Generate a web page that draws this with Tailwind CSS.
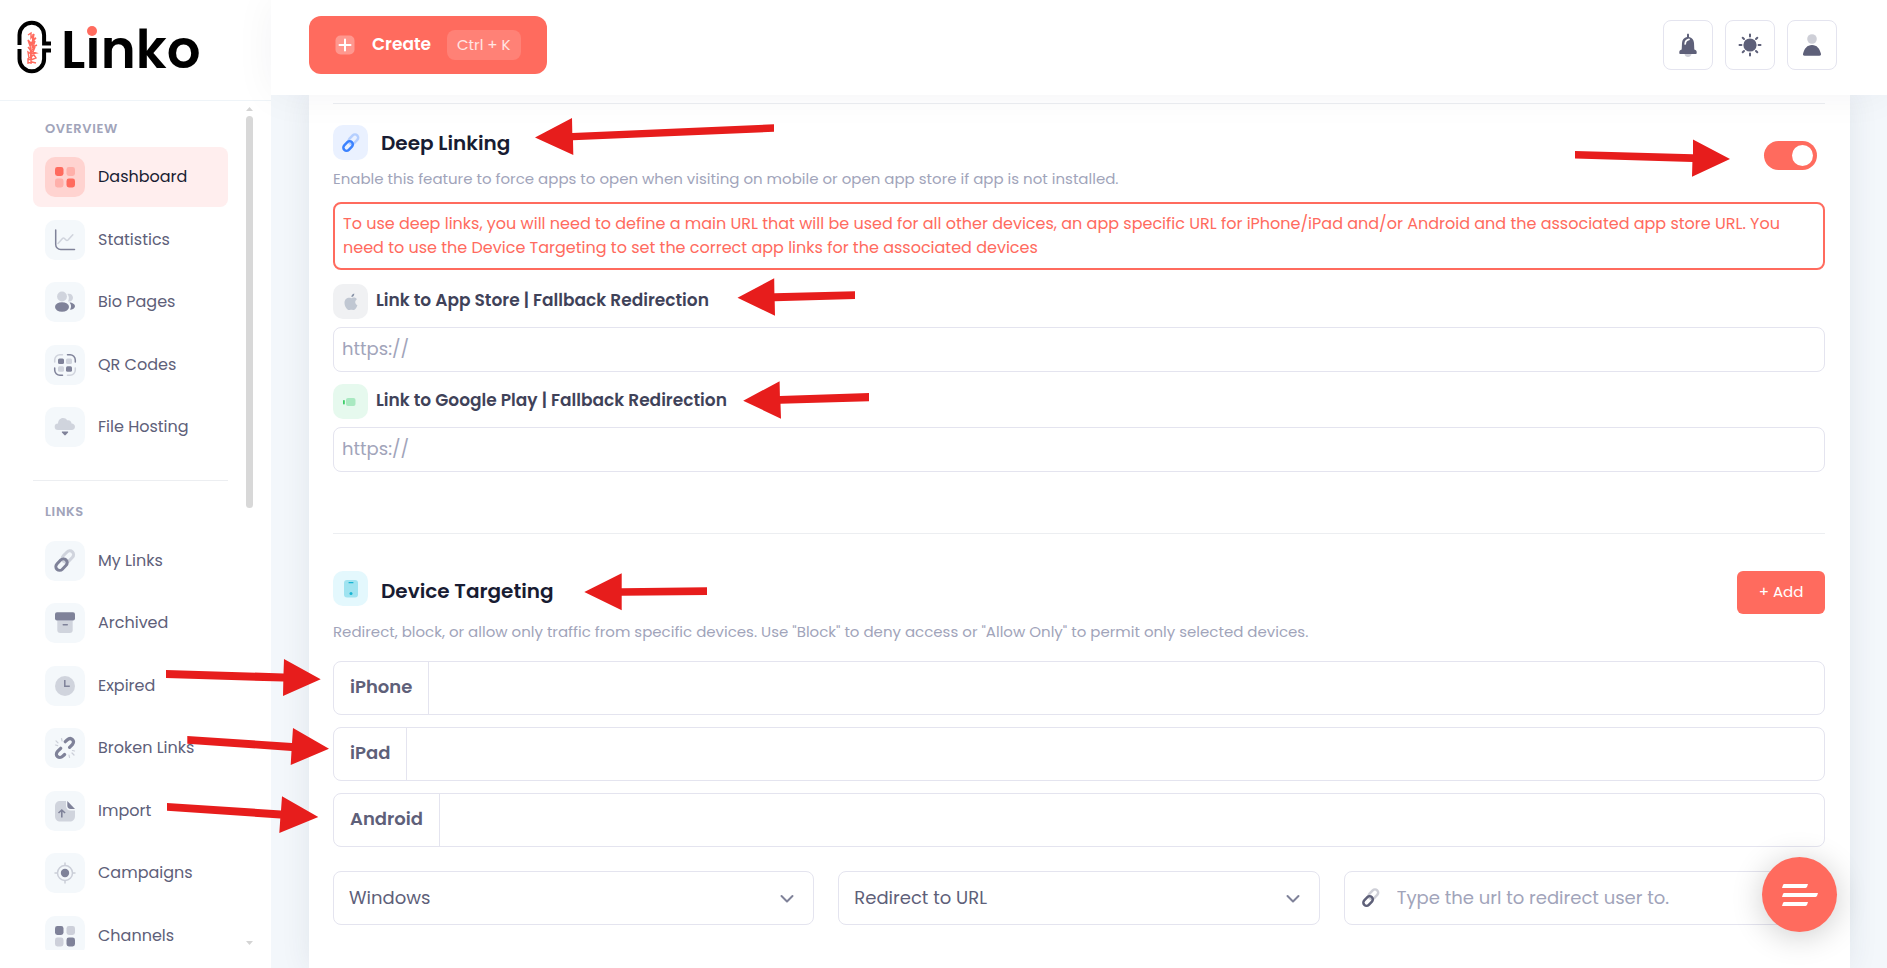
<!DOCTYPE html>
<html lang="en">
<head>
<meta charset="utf-8">
<meta name="viewport" content="width=device-width, initial-scale=1">
<title>Linko</title>
<script src="https://cdn.jsdelivr.net/npm/@tailwindcss/browser@4"></script>
</head>
<body class="relative flex h-screen overflow-hidden bg-[#f3f7fb] font-['Poppins','Inter',sans-serif] text-[#5e6079]">

<svg class="hidden" aria-hidden="true">
  <symbol id="grid" viewBox="0 0 24 24"><g fill="currentColor"><rect x="2" y="2" width="8.5" height="9" rx="2.4"/><rect x="13.5" y="13.5" width="8.5" height="9" rx="2.4"/><g opacity=".33"><rect x="13.5" y="2" width="8.5" height="9" rx="2.4"/><rect x="2" y="13.5" width="8.5" height="9" rx="2.4"/></g></g></symbol>
  <symbol id="chart" viewBox="0 0 24 24"><g fill="none" stroke="currentColor" stroke-linecap="round" stroke-linejoin="round"><path d="M2.7 2v14.500a5 5 0 0 0 5 5H21.500" stroke-width="1.500"/><path opacity=".3" d="M5 15.500l4.500-5q1-1 2 0l1.500 1.500q1 1 2 0l4.800-5.300" stroke-width="1.500"/></g></symbol>
  <symbol id="users" viewBox="0 0 24 24"><g fill="currentColor"><ellipse cx="9" cy="17" rx="7" ry="4.800"/><path d="M16.500 12.600c3 0 5.500 1.800 5.500 3.700s-2.300 3.400-5 3.400c1.500-2.300 1.600-4.800-.5-7.100z"/><g opacity=".3"><circle cx="9" cy="6.500" r="4.900"/><path d="M14.400 3.900c2.800-.9 5.600.9 5.600 3.800 0 2.700-2.500 4.500-5 3.700 1.300-2.300 1.200-5.200-.6-7.500z"/></g></g></symbol>
  <symbol id="qr" viewBox="0 0 24 24"><g fill="none" stroke="currentColor" stroke-width="1.500" stroke-linecap="round"><path d="M14.500 1.700h2.500a5.300 5.300 0 0 1 5.300 5.300v2"/><path d="M1.700 15v2a5.300 5.300 0 0 0 5.300 5.300h2.500"/><g opacity=".3"><path d="M9.500 1.700H7A5.300 5.300 0 0 0 1.700 7v2"/><path d="M22.300 15v2a5.300 5.300 0 0 1-5.300 5.300h-2.500"/></g></g><g fill="currentColor"><rect x="5" y="5.500" width="6" height="5.500" rx="1.500"/><rect x="13" y="13.200" width="6" height="5.500" rx="1.500"/><g opacity=".3"><rect x="13" y="5.500" width="6" height="5.500" rx="1.500"/><rect x="5" y="13.200" width="6" height="5.500" rx="1.500"/></g></g></symbol>
  <symbol id="cloud" viewBox="0 0 24 24"><g fill="currentColor"><path opacity=".3" d="M5 15a3.300 3.300 0 0 1 0-6.600C5.300 5.300 7.200 3 10 3c1.800 0 3.300.9 4.200 2.300 2.300-.7 4.200.8 4.300 3.200 2 .1 3.500 1.500 3.500 3.300S20.600 15 18.800 15z"/><path d="M9.500 16.500h5c.6 0 .9.600.5 1.100l-2.300 2.500q-.7.700-1.400 0L9 17.600c-.4-.5-.1-1.100.5-1.100z"/></g></symbol>
  <symbol id="chain" viewBox="0 0 24 24"><g fill="none" stroke="currentColor" stroke-width="3"><rect opacity=".3" x="8.700" y="3.600" width="13" height="7.600" rx="3.800" transform="rotate(-46 15.200 7.800)"/><rect x="2.300" y="11.700" width="13" height="7.600" rx="3.800" transform="rotate(-46 8.800 15.900)"/></g></symbol>
  <symbol id="archive" viewBox="0 0 24 24"><g fill="currentColor"><rect x="2" y="1.300" width="20" height="8.200" rx="2"/><path opacity=".3" d="M4.300 9.500h15.400V19a3 3 0 0 1-3 3H7.300a3 3 0 0 1-3-3z"/><rect x="9.500" y="13" width="5.500" height="1.400" rx=".7"/></g></symbol>
  <symbol id="clock" viewBox="0 0 24 24"><circle cx="12" cy="12" r="10" fill="currentColor" opacity=".3"/><path d="M11.800 6v6.300h5" fill="none" stroke="currentColor" stroke-width="1.500"/></symbol>
  <symbol id="broken" viewBox="0 0 24 24"><g fill="none" stroke="currentColor" stroke-linecap="round"><path d="M12.300 5.700l1.800-1.700c4-3.700 8.300.8 5.200 4.700l-2.700 2.700M7.700 12.300l-2.900 2.900c-4 4 1.400 8.500 5 5l1.800-1.700" stroke-width="3.200"/><path opacity=".35" d="M8.500 2.500l.6 2.500M3 4.800l2 2M2.500 9l2.200.6M16 19l.5 2.500M19 17l2 2M19.500 14.500l2 .5" stroke-width="1.200"/></g></symbol>
  <symbol id="import" viewBox="0 0 24 24"><g fill="currentColor"><path opacity=".3" d="M7.500 2H13v4.500c0 3 1.800 5 4.800 5H22v5.500c0 3.500-2 5.500-5.500 5.500h-9C4 22.500 2 20.500 2 17V7.500C2 4 4 2 7.500 2z"/><path d="M14.300 2L22 10h-4.200c-2.300 0-3.500-1.400-3.500-3.500z"/></g><path d="M8.800 18.500v-7M5.500 14l3.300-3 3.300 3" fill="none" stroke="currentColor" stroke-width="1.600"/></symbol>
  <symbol id="target" viewBox="0 0 24 24"><circle cx="12" cy="12" r="4.200" fill="currentColor"/><g opacity=".35" fill="none" stroke="currentColor" stroke-width="1.500"><circle cx="12" cy="12" r="7.500"/><path d="M12 1.500v3M12 19.500v3M1.500 12h3M19.500 12h3"/></g></symbol>
  <symbol id="chev" viewBox="0 0 16 16"><path d="M2.500 5l5.500 5.500L13.500 5" fill="none" stroke="currentColor" stroke-width="2" stroke-linecap="round" stroke-linejoin="round"/></symbol>
</svg>

<aside class="flex w-[271px] shrink-0 flex-col bg-white pb-[18px]">
  <a href="#" aria-label="Linko home" class="flex h-[101px] shrink-0 items-start gap-[9px] border-b border-[#eff4f8] pt-[18px] pl-[16px]">
    <svg class="mt-0.5 h-[56px] w-[36px]" viewBox="0 0 36 56" fill="none" aria-hidden="true">
      <path d="M3.500 25V15a12.300 12.300 0 0 1 24.600 0v8.500H35M3.500 29v10a12.300 12.300 0 0 0 24.600 0v-8.500H35" stroke="#000" stroke-width="4"/>
      <path d="M12 15l3-2v5l3-4-1 5 3-1-5 5-3-3 2 6 5-5-2 6 4-2M12 27l3 4 4-4-2 5 3 1-5 1-3-2 1 6 5-3 2 3-5 2-3-1v4l4-1 4 1M14 22l1 20M17 14l-2 30" stroke="#ff6b5e" stroke-width="1.400"/>
    </svg>
    <span class="relative mt-1 text-[53px] leading-[56px] font-semibold text-black">L&#305;nko<span class="absolute top-[4px] left-[26px] size-[10px] rounded-full bg-[#ff6b5e]"></span></span>
  </a>
  <div class="flex min-h-0 flex-1">
    <nav class="flex-1 overflow-hidden pr-[18px] pl-[33px]">
      <h2 class="mt-[18px] pl-[12px] text-[13px] leading-5 font-semibold tracking-wider text-[#a1a4ba]">OVERVIEW</h2>
      <ul class="mt-[8px] flex flex-col gap-0.5 text-[16px] [&>li]:odd:mb-px">
        <li><a href="#" class="flex h-[60px] items-center gap-[13px] rounded-lg bg-[#ffeeee] px-3 text-[#181c32]"><span class="grid size-10 place-items-center rounded-[10px] bg-[#ffd3d0] text-[#ff6b5e]"><svg class="size-6"><use href="#grid"/></svg></span>Dashboard</a></li>
        <li><a href="#" class="flex h-[60px] items-center gap-[13px] px-3"><span class="grid size-10 place-items-center rounded-[10px] bg-[#f4f8fb] text-[#7f8299]"><svg class="size-6"><use href="#chart"/></svg></span>Statistics</a></li>
        <li><a href="#" class="flex h-[60px] items-center gap-[13px] px-3"><span class="grid size-10 place-items-center rounded-[10px] bg-[#f4f8fb] text-[#7f8299]"><svg class="size-6"><use href="#users"/></svg></span>Bio Pages</a></li>
        <li><a href="#" class="flex h-[60px] items-center gap-[13px] px-3"><span class="grid size-10 place-items-center rounded-[10px] bg-[#f4f8fb] text-[#7f8299]"><svg class="size-6"><use href="#qr"/></svg></span>QR Codes</a></li>
        <li><a href="#" class="flex h-[60px] items-center gap-[13px] px-3"><span class="grid size-10 place-items-center rounded-[10px] bg-[#f4f8fb] text-[#7f8299]"><svg class="size-6"><use href="#cloud"/></svg></span>File Hosting</a></li>
      </ul>
      <hr class="mt-[22px] border-[#eceef1]">
      <h2 class="mt-[21px] pl-[12px] text-[13px] leading-5 font-semibold tracking-wider text-[#a1a4ba]">LINKS</h2>
      <ul class="mt-[9px] flex flex-col gap-0.5 text-[16px] [&>li]:even:mb-px">
        <li><a href="#" class="flex h-[60px] items-center gap-[13px] px-3"><span class="grid size-10 place-items-center rounded-[10px] bg-[#f4f8fb] text-[#7f8299]"><svg class="size-6"><use href="#chain"/></svg></span>My Links</a></li>
        <li><a href="#" class="flex h-[60px] items-center gap-[13px] px-3"><span class="grid size-10 place-items-center rounded-[10px] bg-[#f4f8fb] text-[#7f8299]"><svg class="size-6"><use href="#archive"/></svg></span>Archived</a></li>
        <li><a href="#" class="flex h-[60px] items-center gap-[13px] px-3"><span class="grid size-10 place-items-center rounded-[10px] bg-[#f4f8fb] text-[#7f8299]"><svg class="size-6"><use href="#clock"/></svg></span>Expired</a></li>
        <li><a href="#" class="flex h-[60px] items-center gap-[13px] px-3"><span class="grid size-10 place-items-center rounded-[10px] bg-[#f4f8fb] text-[#7f8299]"><svg class="size-6"><use href="#broken"/></svg></span>Broken Links</a></li>
        <li><a href="#" class="flex h-[60px] items-center gap-[13px] px-3"><span class="grid size-10 place-items-center rounded-[10px] bg-[#f4f8fb] text-[#7f8299]"><svg class="size-6"><use href="#import"/></svg></span>Import</a></li>
        <li><a href="#" class="flex h-[60px] items-center gap-[13px] px-3"><span class="grid size-10 place-items-center rounded-[10px] bg-[#f4f8fb] text-[#7f8299]"><svg class="size-6"><use href="#target"/></svg></span>Campaigns</a></li>
        <li><a href="#" class="flex h-[60px] items-center gap-[13px] px-3"><span class="grid size-10 place-items-center rounded-[10px] bg-[#f4f8fb] text-[#7f8299]"><svg class="size-6"><use href="#grid"/></svg></span>Channels</a></li>
      </ul>
    </nav>
    <div class="mr-[18px] flex w-[7px] flex-col pt-[6px] pb-[5px]" aria-hidden="true">
      <svg class="h-1 w-[7px]" viewBox="0 0 7 4"><path d="M3.500 0L7 4H0z" fill="#d4d4d4"/></svg>
      <span class="mt-[5px] h-[392px] rounded-full bg-[#d8d8d8]"></span>
      <svg class="mt-auto h-1 w-[7px]" viewBox="0 0 7 4"><path d="M3.500 4L7 0H0z" fill="#d4d4d4"/></svg>
    </div>
  </div>
</aside>

<div class="flex min-w-0 flex-1 flex-col">
  <header class="z-10 flex shrink-0 items-center justify-between bg-white pt-4 pr-[50px] pb-[21px] pl-[38px] shadow-[0_0_40px_rgba(30,30,60,0.05)]">
    <button class="flex h-[58px] items-center rounded-xl bg-[#ff6b5e] pr-[26px] pl-[24px] text-white">
      <svg class="size-6" viewBox="0 0 24 24" aria-hidden="true"><rect x="2.500" y="2.500" width="19" height="19" rx="5" fill="#fff" opacity=".3"/><path d="M12 6.500v11M6.500 12h11" stroke="#fff" stroke-width="2" stroke-linecap="round"/></svg>
      <span class="ml-[15px] text-[17px] font-semibold">Create</span>
      <kbd class="ml-4 rounded-lg bg-white/15 px-[10px] font-['Poppins','Inter',sans-serif] text-[15px] leading-[30px] text-white/80">Ctrl + K</kbd>
    </button>
    <div class="flex gap-3">
      <button aria-label="Notifications" class="grid size-[50px] place-items-center rounded-lg border border-[#e4e4ef] text-[#5e6079]"><svg class="size-6" viewBox="0 0 24 24" fill="currentColor" aria-hidden="true"><path opacity=".3" d="M8.500 21h7c-.4 1.900-1.700 3-3.500 3s-3.100-1.100-3.500-3z"/><path d="M11 1.500q1-2 2 0v2.400c3 .5 4.800 2.800 5 6l.3 6.600c1.700.5 2.400 1.300 2.400 2.700v.7c0 .7-.5 1.100-1.100 1.100H4.400c-.6 0-1.100-.4-1.100-1.100v-.7c0-1.400.7-2.200 2.400-2.700l.3-6.600c.2-3.200 2-5.500 5-6z"/><path d="M9.200 11c.1-2.400 1.300-4.100 3.800-4.600" fill="none" stroke="#fff" stroke-width="1.700" stroke-linecap="round"/></svg></button>
      <button aria-label="Theme" class="grid size-[50px] place-items-center rounded-lg border border-[#e4e4ef] text-[#5e6079]"><svg class="size-6" viewBox="0 0 24 24" aria-hidden="true"><circle cx="12" cy="12" r="6.600" fill="currentColor"/><path d="M12 1.500v1.900M12 20.600v1.900M1.500 12h1.900M20.600 12h1.900M4.700 4.700L6 6M18 18l1.300 1.300M19.300 4.700L18 6M6 18l-1.300 1.300" stroke="currentColor" stroke-width="2" stroke-linecap="round"/></svg></button>
      <button aria-label="Account" class="grid size-[50px] place-items-center rounded-lg border border-[#e4e4ef] text-[#5e6079]"><svg class="size-6" viewBox="0 0 24 24" fill="currentColor" aria-hidden="true"><circle opacity=".3" cx="12" cy="6" r="4.800"/><path d="M12 12c5 0 7.500 3.500 8.900 8.500.4 1.300-.3 2.300-1.500 2.300H4.600c-1.200 0-1.900-1-1.500-2.300C4.500 15.500 7 12 12 12z"/></svg></button>
    </div>
  </header>

  <main class="flex min-h-0 flex-1 overflow-hidden pr-[37px] pl-[38px]">
    <div class="w-full min-w-0 bg-white pt-2 pr-[25px] pl-6 shadow-[0_0_28px_rgba(40,60,80,0.09)]">
      <hr class="border-[#eceef1]">
      <section class="mt-[21px]">
        <div class="flex items-start justify-between">
          <div>
            <h2 class="flex items-end gap-[13px] text-[20px] leading-[33px] font-semibold text-[#181c32]">
              <span class="grid size-[35px] place-items-center rounded-[10px] bg-[#eaf1ff] text-[#3b82ff]"><svg class="size-5" aria-hidden="true"><use href="#chain"/></svg></span><label for="deep">Deep Linking</label></h2>
            <p class="mt-2 text-[15px] leading-[22px] text-[#a1a4ba]">Enable this feature to force apps to open when visiting on mobile or open app store if app is not installed.</p>
          </div>
          <input id="deep" type="checkbox" role="switch" checked class="mt-4 mr-2 flex h-[29px] w-[53px] shrink-0 appearance-none items-center justify-start rounded-full bg-[#c9ccd8] px-1 before:size-[21px] before:rounded-full before:bg-white checked:justify-end checked:bg-[#ff6b5e]">
        </div>
        <p class="mt-3 rounded-lg border-2 border-[#ff6b5e] px-2 py-2 text-[16px] leading-6 text-[#ff6b5e]">To use deep links, you will need to define a main URL that will be used for all other devices, an app specific URL for iPhone/iPad and/or Android and the associated app store URL. You need to use the Device Targeting to set the correct app links for the associated devices</p>
        <label for="apple" class="mt-[14px] flex items-start gap-2 text-[17px] leading-[33px] font-semibold text-[#3f4259]">
          <span class="grid size-[35px] place-items-center rounded-[10px] bg-[#f0f1f3]"><svg class="size-5" viewBox="0 0 20 20" aria-hidden="true"><path d="M10.300 6.200c1-.6 3.800-1.300 5.600 1-2.500 1.600-2 5 .5 6-1 3-2.900 5.300-4.400 4.800-1.300-.5-2-.5-3.300 0C6.500 18.700 3.500 14.500 3.500 11c0-4 3.300-6 6.800-4.800z" fill="#c0c7d2"/><path d="M10.400 5c0-1.800 1-3.200 2.900-3.600 0 1.900-1 3.300-2.900 3.600z" fill="#8590a5"/></svg></span>Link to App Store | Fallback Redirection</label>
        <input id="apple" type="url" placeholder="https://" class="mt-2 h-[45px] w-full rounded-lg border border-[#e4e4ef] px-2 pb-0.5 text-[18px] outline-none placeholder:text-[#a1a4ba]">
        <label for="play" class="mt-3 flex items-start gap-2 text-[17px] leading-[33px] font-semibold text-[#3f4259]">
          <span class="grid size-[35px] place-items-center rounded-[10px] bg-[#e6f9ee]"><svg class="size-5" viewBox="0 0 20 20" aria-hidden="true"><rect x="5" y="6" width="9.500" height="8" rx="2" fill="#a9e9c1"/><rect x="2" y="8" width="1.800" height="4.500" rx=".8" fill="#3ecf6a"/></svg></span>Link to Google Play | Fallback Redirection</label>
        <input id="play" type="url" placeholder="https://" class="mt-2 h-[45px] w-full rounded-lg border border-[#e4e4ef] px-2 pb-0.5 text-[18px] outline-none placeholder:text-[#a1a4ba]">
      </section>

      <hr class="mt-[61px] border-[#eceef1]">
      <section class="mt-[37px]">
        <div class="flex items-start justify-between">
          <div>
            <h2 class="flex items-end gap-[13px] text-[20px] leading-[29px] font-semibold text-[#181c32]">
              <span class="grid size-[35px] place-items-center rounded-[10px] bg-[#e4f8fd]"><svg class="size-5" viewBox="0 0 20 20" aria-hidden="true"><rect x="3" y="1" width="14" height="17.500" rx="3" fill="#9fe3f0"/><rect x="7.500" y="3" width="5" height="1.300" rx=".6" fill="#17b5d3"/><circle cx="10" cy="14.500" r="1.500" fill="#17b5d3"/></svg></span>Device Targeting</h2>
            <p class="mt-[15px] text-[15px] leading-[22px] text-[#a1a4ba]">Redirect, block, or allow only traffic from specific devices. Use "Block" to deny access or "Allow Only" to permit only selected devices.</p>
          </div>
          <button class="h-[43px] w-[88px] shrink-0 rounded-md bg-[#ff6b5e] text-[15px] text-white">+ Add</button>
        </div>
        <div class="mt-[18px] flex flex-col gap-3 text-[18px]">
          <div class="flex h-[54px] rounded-lg border border-[#e4e4ef]"><label for="iphone" class="flex items-center border-r border-[#e4e4ef] px-4 pb-1 font-semibold">iPhone</label><input id="iphone" type="text" class="min-w-0 flex-1 px-4 outline-none"></div>
          <div class="flex h-[54px] rounded-lg border border-[#e4e4ef]"><label for="ipad" class="flex items-center border-r border-[#e4e4ef] px-4 pb-1 font-semibold">iPad</label><input id="ipad" type="text" class="min-w-0 flex-1 px-4 outline-none"></div>
          <div class="flex h-[54px] rounded-lg border border-[#e4e4ef]"><label for="android" class="flex items-center border-r border-[#e4e4ef] px-4 pb-1 font-semibold">Android</label><input id="android" type="text" class="min-w-0 flex-1 px-4 outline-none"></div>
        </div>
        <div class="mt-6 grid grid-cols-3 gap-6 text-[18px]">
          <div class="relative"><select aria-label="Device" class="h-[54px] w-full appearance-none rounded-lg border border-[#e4e4ef] bg-white px-[15px] pb-0.5 outline-none"><option>Windows</option></select><svg class="pointer-events-none absolute top-5 right-[19px] size-4 text-[#7f8299]" aria-hidden="true"><use href="#chev"/></svg></div>
          <div class="relative"><select aria-label="Action" class="h-[54px] w-full appearance-none rounded-lg border border-[#e4e4ef] bg-white px-[15px] pb-0.5 outline-none"><option>Redirect to URL</option></select><svg class="pointer-events-none absolute top-5 right-[19px] size-4 text-[#7f8299]" aria-hidden="true"><use href="#chev"/></svg></div>
          <label class="flex h-[54px] items-center gap-4 rounded-lg border border-[#e4e4ef] pr-4 pl-4"><svg class="size-5 shrink-0 text-[#5e6079]" aria-hidden="true"><use href="#chain"/></svg><input type="url" aria-label="Redirect URL" placeholder="Type the url to redirect user to." class="min-w-0 flex-1 pb-0.5 outline-none placeholder:text-[#a1a4ba]"></label>
        </div>
      </section>
    </div>
  </main>
</div>

<button aria-label="Menu" class="absolute right-[50px] bottom-[36px] z-20 grid size-[75px] place-items-center rounded-full bg-[#ff6b5e] shadow-[0_4px_32px_rgba(0,0,0,0.2)]"><svg class="h-[22px] w-[36px]" viewBox="0 0 36 22" fill="#fff" aria-hidden="true"><path d="M2.500 0H26l-.8 2.600q-.4 1.400-1.700 1.400H0l.8-2.600Q1.200 0 2.500 0zM2.500 9H36l-.8 2.600q-.4 1.400-1.700 1.400H0l.8-2.600Q1.200 9 2.500 9zM2.500 18H26l-.8 2.600q-.4 1.400-1.700 1.400H0l.8-2.600Q1.200 18 2.500 18z"/></svg></button>

<!-- Tutorial arrows drawn over the page -->
<svg class="pointer-events-none absolute top-0 left-0 z-30 h-[968px] w-[1887px]" viewBox="0 0 1887 968" fill="#e71d1c" aria-hidden="true">
  <path d="M535 137.500L572 118l.3 15L774 124.300v7.400L573 140.300l.3 14.700z"/>
  <path d="M1575 151l118 3.200v-14.700l37 19.500-38 17.700.4-14.700L1575 158.500z"/>
  <path d="M737.500 297.700l36.700-19.400.2 15L855 291.300v7.700l-80.300 2.300.3 14.400z"/>
  <path d="M743.200 400.700l36.400-19.400.3 14.700L869 393v8.300l-88.500 2.400.5 15z"/>
  <path d="M584.300 592l37.400-18.700v15L707 587.300v7.700l-85.300.7v14.600z"/>
  <path d="M166 670l117.500 3.500.5-14.500 36.700 20.300L283 696l.3-14.500L166 678z"/>
  <path d="M187.300 736L292 743l1-15 36 20.700L290.700 765l.8-14-104.200-7.300z"/>
  <path d="M167 803l114 7.500 1-14.200 36.300 20.700-39 16 1-14.500L167 810.700z"/>
</svg>
</body>
</html>
